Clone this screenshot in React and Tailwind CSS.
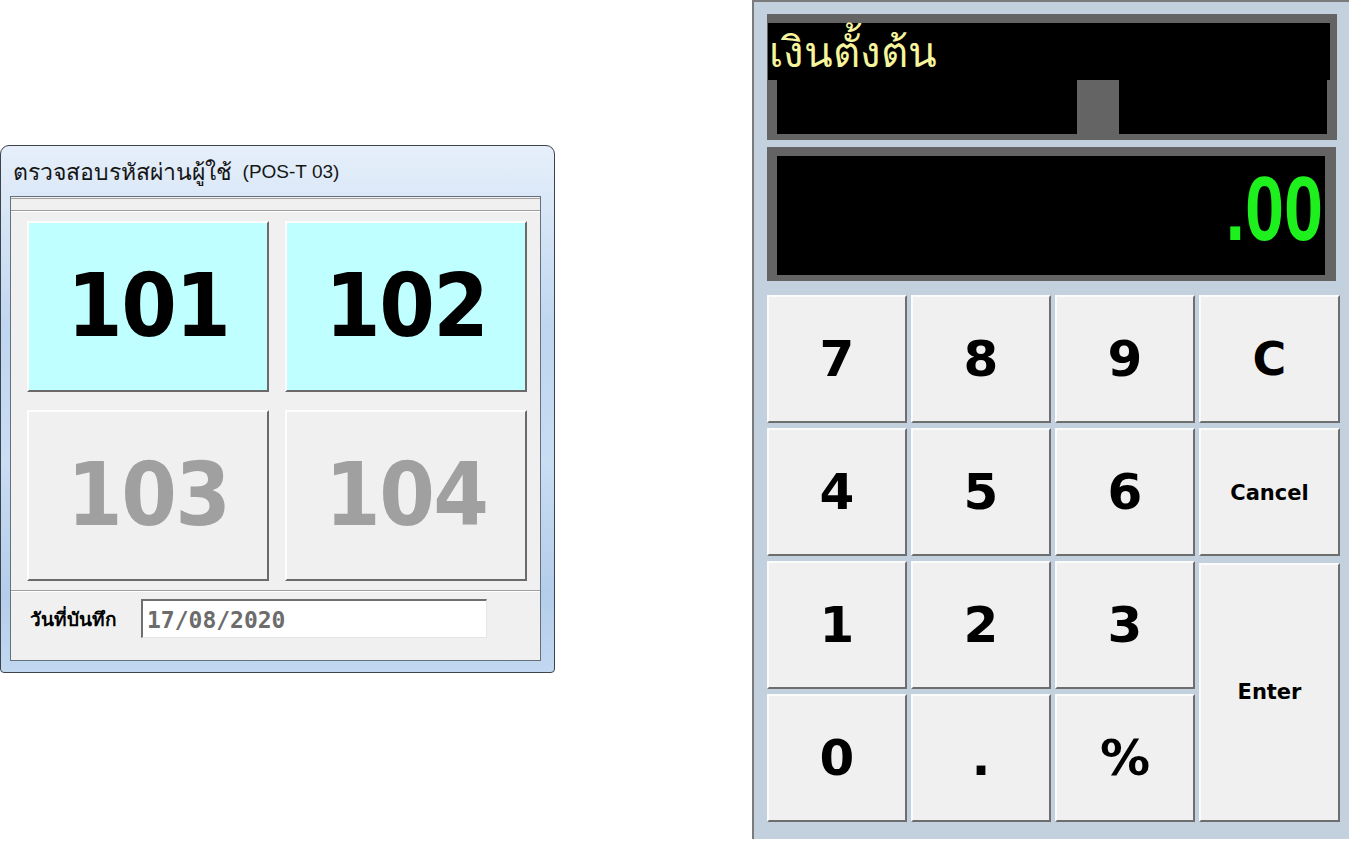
import React from 'react';

const keyClass =
  "flex items-center justify-center bg-[#f0f0f0] border-t-2 border-l-2 border-b-2 border-r-2 border-t-[#fbfbfb] border-l-[#fbfbfb] border-b-[#6e6e6e] border-r-[#6e6e6e] font-['DejaVu_Sans',sans-serif] font-bold text-black";

function UserButton({ label, active }) {
  return (
    <div
      className={
        "flex items-center justify-center h-[171px] border-t-2 border-l-2 border-b-2 border-r-2 border-t-[#fdfdfd] border-l-[#fdfdfd] border-b-[#6a6a6a] border-r-[#6a6a6a] font-['DejaVu_Sans',sans-serif] font-bold " +
        (active ? 'bg-[#c0ffff] text-black' : 'bg-[#f0f0f0] text-[#a0a0a0]')
      }
    >
      <span className="inline-block scale-x-[0.92] text-[87px] tracking-[-0.02em] leading-none">{label}</span>
    </div>
  );
}

function LoginWindow() {
  return (
    <div className="mt-[145px] w-[555px] h-[528px] shrink-0 flex flex-col rounded-t-[9px] rounded-b-[4px] border border-[#3d434a] bg-[linear-gradient(to_bottom,#e6effa_0%,#d6e5f6_14%,#bfd6f0_35%,#c9ddf3_60%,#b4cdea_85%,#c2d8f1_100%)]">
      <div className="h-[50px] flex items-center pl-[12px] pt-[2px] text-[#161616] font-['Liberation_Sans','Noto_Sans',sans-serif] whitespace-pre">
        <span className="text-[23px]">ตรวจสอบรหัสผ่านผู้ใช้</span>
        <span className="text-[19px]">  (POS-T 03)</span>
      </div>
      <div className="ml-[9px] mr-[13px] mb-[11px] flex-1 flex flex-col border border-[#66707c] bg-[#f0f0f0]">
        <div className="mt-[1px] h-[13px] border-t border-[#a3a3a3] border-b border-b-[#9c9c9c] shadow-[0_1px_0_#ffffff]" />
        <div className="grid grid-cols-[242px_242px] gap-x-[16px] gap-y-[18px] pl-[16px] pt-[10px] pb-[9px]">
          <UserButton label="101" active />
          <UserButton label="102" active />
          <UserButton label="103" />
          <UserButton label="104" />
        </div>
        <div className="flex-1 border-t border-[#a0a0a0] shadow-[inset_0_1px_0_#ffffff] flex items-start pt-[8px] pl-[19px]">
          <div className="h-[39px] flex items-center w-[111px] pt-[3px] text-[19px] font-bold text-black font-['Liberation_Sans','Noto_Sans',sans-serif]">
            วันที่บันทึก
          </div>
          <div className="w-[346px] h-[39px] bg-white border-t-2 border-l-2 border-t-[#6f6f6f] border-l-[#6f6f6f] border-b border-r border-b-[#e6e6e6] border-r-[#e6e6e6] flex items-center pl-[4px] pt-[3px] font-['DejaVu_Sans_Mono',monospace] font-bold text-[23px] text-[#6c6c6c]">
            17/08/2020
          </div>
        </div>
      </div>
    </div>
  );
}

function Keypad() {
  const keys = [
    { k: '7' }, { k: '8' }, { k: '9' }, { k: 'C', size: 'text-[46px]' },
    { k: '4' }, { k: '5' }, { k: '6' }, { k: 'Cancel', size: 'text-[21px] pt-[4px]' },
    { k: '1' }, { k: '2' }, { k: '3' }, { k: 'Enter', size: 'text-[21px]', span: true },
    { k: '0' }, { k: '.' }, { k: '%' },
  ];
  return (
    <div className="grid grid-cols-[140px_140px_140px_141px] grid-rows-[128px_128px_128px_128px] gap-x-[4px] gap-y-[5px] mt-[14px]">
      {keys.map((key) => (
        <div
          key={key.k}
          className={keyClass + ' ' + (key.size || 'text-[50px]') + (key.span ? ' row-span-2 mt-[2px]' : '')}
        >
          {key.k}
        </div>
      ))}
    </div>
  );
}

function CalcPanel() {
  return (
    <div className="ml-[197px] w-[597px] h-[839px] shrink-0 border-l-2 border-t-2 border-[#7b7b7b] bg-[#c3d1de] pl-[13px] pt-[12px]">
      <div className="w-[570px] h-[126px] bg-[#646464] flex flex-col">
        <div className="ml-[1px] mt-[9px] w-[562px] h-[57px] bg-black flex items-start pt-[9px] pl-[1px] text-[42px] leading-none text-[#f6f49c] font-['Liberation_Sans','Noto_Sans',sans-serif]">
          เงินตั้งต้น
        </div>
        <div className="ml-[10px] flex h-[54px]">
          <div className="w-[300px] bg-black" />
          <div className="w-[42px]" />
          <div className="w-[208px] bg-black" />
        </div>
      </div>
      <div className="mt-[7px] w-[569px] h-[134px] bg-[#646464] pl-[10px] pt-[9px] pr-[11px] pb-[6px]">
        <div className="h-full bg-black flex items-center justify-end pr-[2px] pb-[14px]">
          <span className="inline-block origin-right scale-x-[0.78] text-[90px] font-bold leading-none text-[#1ef01e] font-['Liberation_Sans',sans-serif]">
            .00
          </span>
        </div>
      </div>
      <Keypad />
    </div>
  );
}

export default function App() {
  return (
    <div className="flex w-[1349px] h-[841px] bg-white overflow-hidden">
      <LoginWindow />
      <CalcPanel />
    </div>
  );
}
